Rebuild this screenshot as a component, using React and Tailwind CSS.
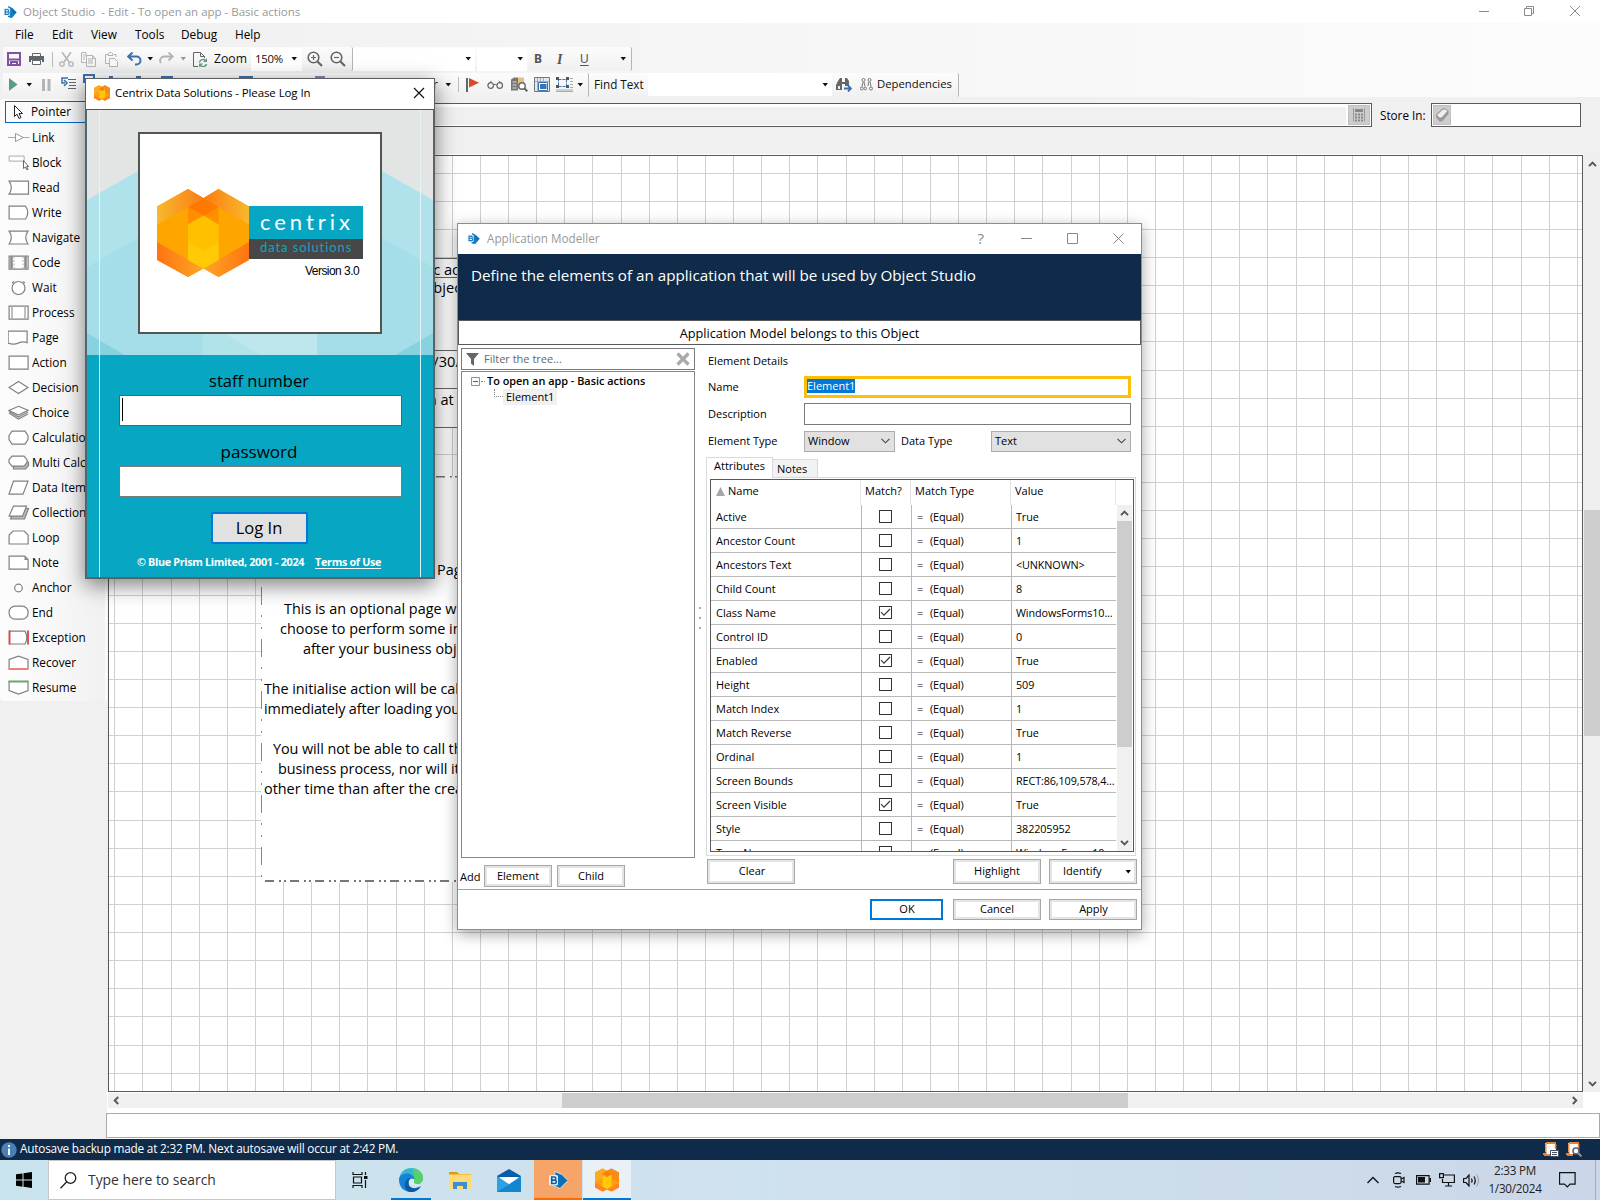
import React from "react";

const Caret = ({ className = "" }) => (
  <svg width="7" height="4" viewBox="0 0 7 4" className={"shrink-0 " + className} fill="currentColor">
    <path d="M0.5 0h5.5L3.25 3.4z" />
  </svg>
);

const Svg = ({ w = 16, h = 16, className = "", children, ...rest }) => (
  <svg width={w} height={h} viewBox={`0 0 ${w} ${h}`} fill="none" className={"shrink-0 " + className} {...rest}>
    {children}
  </svg>
);

const PrismIcon = ({ size = 14, className = "" }) => (
  <svg width={size} height={size} viewBox="0 0 14 14" className={"shrink-0 " + className}>
    <path d="M5.5 1 9.500 3.300 13.700 7.200 8.800 13 5 12z" fill="#0b6fb4" />
    <path d="M5.5 1 9.500 3.300 10 9 13.700 7.200 8.800 13 5 12z" fill="#2a8fd0" opacity="0.4" />
    <rect x="0.5" y="3" width="6.6" height="7.8" rx="1" fill="#e4f3fb" />
    <path d="M2.200 4.500h2.300a1.100 1.100 0 0 1 0 2.300H2.200zM2.200 6.800h2.700a1.200 1.200 0 0 1 0 2.500H2.200z" fill="none" stroke="#1d7cbd" strokeWidth="1.200" />
  </svg>
);

const HexIcon = ({ size = 16, className = "" }) => (
  <svg width={size} height={size} viewBox="0 0 16 16" className={"shrink-0 " + className}>
    <path d="M5 0.3 8 1.8 11 0.3 16 3v10l-5 2.7L8 14.3 5 15.7 0 13V3z" fill="#ff9d0c" />
    <path d="M0 3 5 .3 8 1.8 5 4v3L0 9.500z" fill="#f9ab22" />
    <path d="M11 .3 16 3v6.500L11 7V4L8 1.800z" fill="#f98a1c" />
    <path d="M5 4.500 8 6l3-1.500v8L8 14l-3-1.500z" fill="#ffc80a" />
    <path d="M5 4 8 1.800 11 4 8 6z" fill="#ff7d05" />
    <path d="M0 10l5 2.500L8 14.300 5 15.700 0 13z" fill="#ff8420" />
    <path d="M16 10l-5 2.500L8 14.300l3 1.400 5-2.700z" fill="#ff8420" />
  </svg>
);

/* ---------- Top area ---------- */

function TitleBar() {
  return (
    <div className="flex h-[23px] items-center bg-white pl-[3px] text-[#999]">
      <PrismIcon size={14} />
      <span className="ml-[6px] text-[11.500px] whitespace-pre">Object Studio  - Edit - To open an app - Basic actions</span>
      <div className="mb-[2px] ml-auto flex items-center pr-[20px]">
        <Svg w={10} h={10}><path d="M0 5.500h10" stroke="#8a8a8a" /></Svg>
        <Svg w={10} h={10} className="ml-[35px]"><path d="M0.500 2.500h7v7h-7zM2.500 2.500v-2h7v7h-2" stroke="#8a8a8a" /></Svg>
        <Svg w={10} h={10} className="ml-[36px]"><path d="M0 0l10 10M10 0L0 10" stroke="#8a8a8a" /></Svg>
      </div>
    </div>
  );
}

function MenuBar() {
  return (
    <div className="flex h-[24px] items-center pl-[15px] text-[11.800px]">
      <span className="w-[37px]">File</span>
      <span className="w-[39px]">Edit</span>
      <span className="w-[44px]">View</span>
      <span className="w-[46px]">Tools</span>
      <span className="w-[54px]">Debug</span>
      <span>Help</span>
    </div>
  );
}

const Strip = ({ className = "", children }) => (
  <div className={"flex h-[24px] items-center rounded-[2px] border-r border-[#b5b5b5] bg-linear-to-b from-[#fcfcfc] to-[#f0f0f0] " + className}>
    {children}
  </div>
);

function Toolbars() {
  return (
    <div className="flex h-[50px] flex-col">
      <div className="flex h-[25px] text-[#111]">
        <Strip className="ml-[3px] w-[350px] pl-[4px]">
          <Svg w={14} h={14}><path d="M1 1h12v12H1z" stroke="#8152a3" strokeWidth="2" /><path d="M1 7.500h12M4 13v-3h6v3" stroke="#8152a3" strokeWidth="2" /></Svg>
          <Svg w={15} h={14} className="ml-[8px]"><path d="M3.500 4V1.500h8V4" stroke="#5f666c" /><path d="M0 4h15v6h-2V8H2v2H0z" fill="#5f666c" /><path d="M3.500 8.500h8v4h-8z" stroke="#5f666c" fill="#fff" /></Svg>
          <div className="ml-[8px] h-[15px] w-px bg-[#bbb]" />
          <Svg w={15} h={15} className="ml-[6px]"><path d="M3 0l7 10M12 0L5 10" stroke="#b4b4b4" strokeWidth="1.500" /><circle cx="3" cy="12" r="2.200" stroke="#b4b4b4" strokeWidth="1.300" /><circle cx="12" cy="12" r="2.200" stroke="#b4b4b4" strokeWidth="1.300" /></Svg>
          <Svg w={15} h={15} className="ml-[7px]"><path d="M5 4V.500H.500v10H5M5.500 3.500h6l3 3v8h-9z" stroke="#b4b4b4" /><path d="M2 3h2M2 5h2M2 7h2M7 7h5M7 9h5M7 11h5M11.500 3.500v3h3" stroke="#b4b4b4" /></Svg>
          <Svg w={13} h={15} className="ml-[9px]"><path d="M4 11.500H.500v-9H3M9 2.500h2V5M3 3.500V2l1.500-1.500h2L8 2v1.500z" stroke="#b4b4b4" /><path d="M4.500 6.500h5l3 3v5h-8z" stroke="#b4b4b4" fill="#fafafa" /></Svg>
          <Svg w={15} h={14} className="ml-[9px]"><path d="M1 4.500h8.500a4 4 0 0 1 0 8H8M5.500 0.500l-4.300 4 4.300 4" stroke="#3a72b0" strokeWidth="2" /></Svg>
          <Caret className="ml-[5px]" />
          <Svg w={15} h={14} className="ml-[5px]"><path d="M14 4.500H5.500a4 4 0 0 0-3.500 6.500M9.500 0.500l4.300 4-4.300 4" stroke="#b4b4b4" strokeWidth="1.800" /></Svg>
          <Caret className="ml-[6px] text-[#999]" />
          <Svg w={15} h={15} className="ml-[6px]"><path d="M5 14.500H.500V.500h7l4 4V6M7.500.500v4h4" stroke="#666" /><path d="M6.500 10.500a3.500 3.500 0 0 1 6-2M13.500 12a3.500 3.500 0 0 1-6 1.500" stroke="#5f9f86" strokeWidth="1.500" /><path d="M14 6v4h-4zM6 15.500v-4h4z" fill="#5f9f86" /></Svg>
          <span className="ml-[6px] w-[37px] text-[12.200px]">Zoom</span>
          <div className="flex h-[23px] w-[51px] items-center bg-white pl-[4px]">
            <span className="w-[35px] text-[11.400px] tracking-[-0.02em]">150%</span>
            <Caret className="ml-[1px]" />
          </div>
          <Svg w={16} h={16} className="ml-[5px]"><circle cx="6.500" cy="6.500" r="5.300" stroke="#666" strokeWidth="1.600" /><path d="M10.500 10.500l4.500 4.500" stroke="#666" strokeWidth="2.200" /><path d="M4 6.500h5M6.500 4v5" stroke="#3a72b0" strokeWidth="1.200" /></Svg>
          <Svg w={16} h={16} className="ml-[7px]"><circle cx="6.500" cy="6.500" r="5.300" stroke="#666" strokeWidth="1.600" /><path d="M10.500 10.500l4.500 4.500" stroke="#666" strokeWidth="2.200" /><path d="M4 6.500h5" stroke="#3a72b0" strokeWidth="1.200" /></Svg>
        </Strip>
        <Strip className="w-[279px]">
          <div className="flex h-[23px] w-[122px] items-center justify-end bg-white pr-[3px]"><Caret /></div>
          <div className="ml-[2px] flex h-[23px] w-[50px] items-center justify-end bg-white pr-[3px]"><Caret /></div>
          <span className="ml-[7px] w-[23px] font-['Noto_Sans'] text-[12px] font-bold text-[#555]">B</span>
          <span className="w-[23px] font-['Liberation_Serif'] text-[14px] font-bold text-[#555] italic">I</span>
          <span className="font-['Liberation_Sans'] text-[12px] text-[#555] underline underline-offset-2">U</span>
          <Caret className="ml-auto mr-[4px]" />
        </Strip>
      </div>
      <div className="flex h-[25px] items-center text-[#111]">
        <Strip className="ml-[3px] w-[586px] pl-[6px]">
          <Svg w={9} h={13}><path d="M0 0l8.500 6.500L0 13z" fill="#5c9c84" /></Svg>
          <Caret className="ml-[8px]" />
          <Svg w={9} h={12} className="ml-[9px]"><path d="M0 0h3v12H0zM5.500 0h3v12h-3z" fill="#b4b4b4" /></Svg>
          <Svg w={16} h={13} className="mb-[3px] ml-[9px]"><path d="M8 1H2v5h3M4 3l3 3-3 3" stroke="#3a72b0" strokeWidth="1.500" /><path d="M8 2.500h8M9 5.500h7M9 8.500h7M8 11.500h8" stroke="#666" /></Svg>
          <div className="mb-[12px] ml-[7px] h-[9px] w-[12px] border-2 border-[#3a72b0]" />
          <div className="mb-[14px] ml-[14px] h-[3px] w-[4px] bg-[#3a72b0]" />
          <div className="mb-[14px] ml-[23px] h-[3px] w-[5px] bg-[#3a72b0]" />
          <div className="mb-[14px] ml-[20px] h-[4px] w-[12px] bg-[#3a72b0]" />
          <div className="mb-[14px] ml-[66px] h-[3px] w-[14px] bg-[#3a72b0]" />
          <div className="mb-[14px] ml-[62px] h-[3px] w-[10px] bg-[#9a7bb0]" />
          <span className="ml-auto text-[12px] font-medium">r</span>
          <Caret className="ml-[7px]" />
          <div className="ml-[6px] h-[15px] w-px bg-[#bbb]" />
          <Svg w={13} h={14} className="ml-[7px]"><path d="M1 0v14" stroke="#666" strokeWidth="2" /><path d="M3 0l10 4.700L3 9.400z" fill="#d9492a" /></Svg>
          <Svg w={17} h={9} className="ml-[8px]"><circle cx="3.700" cy="5.500" r="2.800" stroke="#666" strokeWidth="1.200" /><circle cx="12.700" cy="5.500" r="2.800" stroke="#666" strokeWidth="1.200" /><path d="M6.500 5q1.700-1.500 3.400 0M1 4.500L4.500.800M15.500 4.500L12 .800" stroke="#666" /></Svg>
          <Svg w={17} h={15} className="ml-[7px]"><path d="M0 2.500L3 .500h4v13H0z" fill="#777" /><path d="M1.500 5h4M1.500 8h4M1.500 11h4" stroke="#ddd" /><path d="M7 .500h6v5H9v6H7z" fill="#e8bf78" /><circle cx="11" cy="9" r="3.200" stroke="#666" strokeWidth="1.400" fill="#fff" /><path d="M13.300 11.300l3 3" stroke="#666" strokeWidth="2" /></Svg>
          <Svg w={16} h={15} className="ml-[6px]"><path d="M.500.500h15v14H.500z" stroke="#777" fill="#e3ebf2" /><path d="M3.500 1v13M6.500 1v5M9.500 1v3M1 4.500h14" stroke="#aaa" /><path d="M4.500 5.500h9v8h-9z" fill="#fff" stroke="#3a72b0" /><path d="M6 7h6.500v5H6z" fill="#3a72b0" /></Svg>
          <Svg w={17} h={15} className="ml-[6px]"><path d="M2.500 2.500h8v7h-8z" stroke="#3a72b0" strokeDasharray="3 1" /><path d="M0 0h3v3H0zM10 0h3v3h-3zM0 8h3v3H0zM10 8h3v3h-3z" fill="#555" /><path d="M14 1.500h3M14 4.500h3M14 7.500h3M14 10.500h3M0 13h17M0 14.500h17" stroke="#aaa" /></Svg>
          <Caret className="ml-[4px] mr-[4px]" />
        </Strip>
        <Strip className="w-[370px] pl-[5px] text-[11.700px]">
          <span className="w-[54px] whitespace-nowrap">Find Text</span>
          <div className="flex h-[23px] w-[184px] items-center justify-end bg-white pr-[3px]"><Caret /></div>
          <Svg w={16} h={15} className="ml-[4px]"><path d="M2 4L4 1h2v4h3V1h2l2 3v5H9V7H6v6H0V8z" fill="#666" /><path d="M2 9h2v3H2z" fill="#eee" /><path d="M8 11.500h7M12 8.500l3 3-3 3" stroke="#3a72b0" strokeWidth="1.800" /></Svg>
          <Svg w={13} h={13} className="ml-[8px]"><g stroke="#777"><circle cx="3.500" cy="2" r="1.500" /><circle cx="9.500" cy="2" r="1.500" /><circle cx="1.800" cy="10.500" r="1.500" /><circle cx="5.300" cy="10.500" r="1.300" /><circle cx="11" cy="10.500" r="1.500" /><path d="M3 4L2 8.500M4 4l1 4.500M10 4l1 4.500M8.500 4L8 8" /></g></Svg>
          <span className="ml-[4px] text-[11.300px]">Dependencies</span>
        </Strip>
      </div>
    </div>
  );
}

/* ---------- Toolbox ---------- */

const s = { stroke: "#808080", strokeWidth: 1.2, fill: "#fff" };
const toolIcons = {
  Pointer: <path d="M7 0v11l2.500-2.300L11.500 13l2-1-2-4H15z" stroke="#222" fill="#fff" />,
  Link: <><path d="M-1 7h22" stroke="#aaa" /><path d="M7 3l8 4-8 4z" stroke="#999" fill="#fff" /></>,
  Block: <><path d="M.600.600h15v5H.600z" stroke="#aaa" fill="#fff" /><path d="M15 5v8l2-1.500 1.500 3 1-.500-1.300-3H20z" stroke="#666" fill="#fff" /></>,
  Read: <path d="M.600.600H20v13H.600Q5 7 .600.600z" {...s} />,
  Write: <path d="M.600.600H17Q21.500 7 17 13.500H.600z" {...s} />,
  Navigate: <path d="M.600.600H19.500Q15 7 19.500 13.500H.600Q5 7 .600.600z" {...s} />,
  Code: <><path d="M.600.600h19v13H.600z" {...s} /><path d="M3 1v12M17 1v12" stroke="#888" strokeWidth="2.500" /><path d="M5.500 1v12M14.500 1v12" stroke="#aaa" strokeDasharray="2 1.500" /></>,
  Wait: <><circle cx="10" cy="7.500" r="6.500" {...s} /><path d="M3.500 2.500l2-1.500M16.500 2.500l-2-1.500" stroke="#888" strokeWidth="1.500" /></>,
  Process: <><path d="M.600.600h19v13H.600z" {...s} /><path d="M3.500 1v12M16.500 1v12" stroke="#aaa" strokeWidth="1.500" /></>,
  Page: <path d="M-.4.600h19v11.500q-4.500-1.500-9 .500t-10 0z" {...s} />,
  Action: <path d="M.600.600h19v13H.600z" {...s} />,
  Decision: <path d="M10 1l9.500 6L10 13 .500 7z" {...s} />,
  Choice: <><path d="M.500 7.500L10 13.500l9.500-5" {...s} /><path d="M.500 6L10 11.500l9.500-5" {...s} /><path d="M10 .800l9.500 4L10 9.500.500 5z" {...s} /></>,
  Calculation: <path d="M3.500.600h13l3 4.500v4l-3 4.500h-13l-3-4.500v-4z" {...s} />,
  "Multi Calc": <><path d="M4 4h13l3 3v3l-3 3.500H5z" {...s} fill="#bbb" /><path d="M3.500.600h12l3 3.500v3l-3 3.500h-12l-3-3.500v-3z" {...s} /></>,
  "Data Item": <path d="M5 .600h14.500l-5 13H.500z" {...s} />,
  Collection: <><path d="M7 3h13l-4 10.500H2z" {...s} fill="#bbb" /><path d="M5 .600h13l-4 10H.600z" {...s} /></>,
  Loop: <path d="M.600 13.500V4.500l4-4h11l4 4v9z" {...s} />,
  Note: <><path d="M.600.600h15.500l3.500 3.500v9.500H.600z" {...s} /><path d="M16 .600v4h3.600z" fill="#888" /></>,
  Anchor: <circle cx="10" cy="7.500" r="3.800" {...s} />,
  End: <rect x=".6" y=".6" width="19" height="13" rx="6" {...s} />,
  Exception: <><path d="M1 .600h15.500Q20 7 16.500 13.500H1z" {...s} /><path d="M1 0v14M19.500 0v14" stroke="#e04343" strokeWidth="1.800" /></>,
  Recover: <><path d="M.600 13V4L10 .600 19.500 4v9z" {...s} /><path d="M0 13.500h20" stroke="#ec8080" strokeWidth="2" /></>,
  Resume: <><path d="M.600 1v9L10 13.500l9.500-3.500V1z" {...s} /><path d="M0 1h20" stroke="#6ba56b" strokeWidth="2" /></>,
};

function Toolbox() {
  return (
    <div className="w-[107px] shrink-0 border-r-2 border-[#fbfbfb]">
      <div className="flex h-[602px] w-[104px] flex-col rounded-[4px] bg-linear-to-r from-[#fcfcfc] via-[#f8f8f8] to-[#f1f1f1] pt-px pl-[5px]">
        {Object.entries(toolIcons).map(([name, icon], i) => (
          <div key={name} className={"flex h-[25px] shrink-0 items-center " + (i === 0 ? "h-[22px]! mt-px mb-[2px] border border-[#0067c0] pl-[2px]" : "pl-[3px]")}>
            <svg width="22" height="15" viewBox="-0.500 -0.500 22 15" fill="none" className={"shrink-0 " + (i === 0 ? "-ml-px" : "")}>{icon}</svg>
            <span className="ml-[2px] text-[11.800px] whitespace-nowrap">{name}</span>
          </div>
        ))}
      </div>
    </div>
  );
}

/* ---------- Diagram canvas ---------- */

function Grid() {
  const xs = Array.from({ length: 53 }, (_, k) => Math.floor(114.8 + 28.125 * k) - 109 + 0.5);
  const ys = Array.from({ length: 33 }, (_, k) => Math.floor(173.2 + 28.125 * k) - 156 + 0.5);
  return (
    <svg width="1473" height="935" className="absolute inset-0">
      {xs.map((x) => <line key={x} x1={x} x2={x} y1="0" y2="935" stroke="#d0d0d0" />)}
      {ys.map((y) => <line key={y} x1="0" x2="1473" y1={y} y2={y} stroke="#d0d0d0" />)}
    </svg>
  );
}

function Canvas() {
  return (
    <div className="relative h-[937px] w-[1475px] overflow-hidden border border-[#5a5a5a] bg-white text-[14.400px] leading-[20px]">
      <Grid />
      {/* information stage */}
      <div className="absolute top-[102px] left-[240px] w-[160px] border border-[#666] bg-white text-[14.600px]">
        <div className="flex h-[19px] items-center border-b border-[#666] pt-[2px] pl-[55px] leading-[19px] whitespace-nowrap">Basic actions</div>
        <div className="h-[73px] border-b border-[#666] pl-[72px] leading-[18px] whitespace-nowrap">Object</div>
        <div className="h-[38px] border-b border-[#666] pl-[75px] whitespace-nowrap">1/30/2024</div>
        <div className="h-[38px] pl-[74px] whitespace-nowrap">in at</div>
      </div>
      {/* note stage */}
      <div className="absolute top-[320px] left-[152px] h-[406px] w-[400px] bg-white">
        <svg width="400" height="406" className="absolute inset-0" fill="none">
          <path d="M0.500 0v404" stroke="#888" strokeDasharray="18 10 2 10 2 10" strokeDashoffset="-7" />
          <path d="M4 405h396M0 .500h400" stroke="#777" strokeWidth="2" strokeDasharray="9 5 2 3 2 4" />
        </svg>
        <div className="absolute top-[84px] left-[3px] flex w-[390px] flex-col whitespace-pre">
          <div className="pl-[173px]">Page</div>
          <div className="pt-[19px] pl-[20px]">This is an optional page where you might</div>
          <div className="pl-[16px]">choose to perform some initialisation tasks</div>
          <div className="pl-[39px]">after your business object is initialised.</div>
          <div className="pt-[20px] tracking-[-0.005em]">The initialise action will be called automatically</div>
          <div className="tracking-[-0.010em]">immediately after loading your business object.</div>
          <div className="pt-[20px] pl-[9px] tracking-[-0.005em]">You will not be able to call this action from a</div>
          <div className="pl-[14px] tracking-[-0.005em]">business process, nor will it be called at any</div>
          <div>other time than after the creation of the object.</div>
        </div>
      </div>
    </div>
  );
}

const Chevron = ({ dir }) => (
  <svg width="9" height="9" viewBox="0 0 9 9" fill="none" className="shrink-0">
    {dir === "up" && <path d="M1 6.200l3.500-3.500L8 6.200" stroke="#555" strokeWidth="1.900" />}
    {dir === "down" && <path d="M1 2.800l3.500 3.500L8 2.800" stroke="#555" strokeWidth="1.900" />}
    {dir === "left" && <path d="M6.200 1L2.700 4.500 6.200 8" stroke="#555" strokeWidth="1.900" />}
    {dir === "right" && <path d="M2.800 1l3.500 3.500L2.800 8" stroke="#555" strokeWidth="1.900" />}
  </svg>
);

function Workspace() {
  return (
    <div className="flex h-[1042px] bg-[#f0f0f0]">
      <div className="pt-[2px]"><Toolbox /></div>
      <div className="flex flex-1 flex-col">
        <div className="flex h-[57px] items-start pt-[6px]">
          <div className="flex h-[24px] w-[1265px] items-center justify-end border border-[#5a5a5a] bg-white pr-px">
            <div className="mt-[2px] mr-[2px] h-[18px] w-[1237px] bg-[#f0f0f0]" />
            <div className="flex h-[20px] w-[22px] items-center justify-center border border-[#c0c0c0] bg-[#cdcdcd]">
              <Svg w={12} h={14}><path d="M.500 0v13.500M11.500 0v13.500" stroke="#999" /><path d="M2 1h8v3H2z" fill="#888" /><path d="M2 6.500h8M2 9.500h8M2 12.500h8" stroke="#888" strokeWidth="2" strokeDasharray="2 1" /></Svg>
            </div>
          </div>
          <span className="mt-[4px] w-[59px] pl-[8px] text-[11.700px] whitespace-nowrap">Store In:</span>
          <div className="flex h-[24px] w-[150px] items-center border border-[#5a5a5a] bg-white pl-px">
            <div className="flex h-[20px] w-[18px] items-center justify-center border border-[#c0c0c0] bg-[#cdcdcd]">
              <Svg w={14} h={14}><path d="M1 9V6.500L7.500.500H10L13.500 3v3L7 13.500H4.500z" fill="#999" /><path d="M1.500 7L8 1h2l3 2-6.500 7H4.500z" fill="#eee" stroke="#888" strokeWidth=".7" /></Svg>
            </div>
          </div>
        </div>
        <div className="flex">
          <div className="w-px bg-[#f0f0f0]" />
          <div className="border-t border-white"><Canvas /></div>
          <div className="ml-px flex w-[16px] flex-col items-center bg-[#efefef] pt-[6px] pb-[4px]">
            <Chevron dir="up" />
            <div className="mt-[341px] h-[226px] w-full bg-[#cdcdcd]" />
            <div className="mt-auto"><Chevron dir="down" /></div>
          </div>
        </div>
        <div className="flex h-[17px] bg-white pt-px">
          <div className="ml-px flex h-[15px] w-[1475px] items-center bg-[#f0f0f0] px-[4px]">
            <Chevron dir="left" />
            <div className="ml-[441px] h-[15px] w-[566px] bg-[#cdcdcd]" />
            <div className="ml-auto"><Chevron dir="right" /></div>
          </div>
        </div>
        <div className="h-[30px] bg-white pt-[4px]"><div className="-ml-px h-[25px] border border-[#aaa] bg-white" /></div>
      </div>
    </div>
  );
}

function StatusBar() {
  return (
    <div className="flex h-[21px] items-center bg-[#0f2b49] pr-[18px] pl-px text-[12px] text-white">
      <Svg w={16} h={16}><circle cx="8" cy="8" r="7.700" fill="#4a7fb8" /><path d="M7 3h2v2H7zM7 6.500h2V13H7z" fill="#fff" /></Svg>
      <span className="mb-[2px] ml-[3px] text-[11.800px] tracking-[-0.018em]">Autosave backup made at 2:32 PM. Next autosave will occur at 2:42 PM.</span>
      <Svg w={16} h={15} className="ml-auto"><path d="M2 1h11v9H2z" fill="#fff" /><path d="M3 1.500v9M12.500 2v5M0 12h5M1 13h6M3 1h10" stroke="#ea8033" strokeWidth="1.800" /><path d="M3.500 2h8v10h-8z" fill="#fff" /><path d="M7.500 8.500h8v6h-8z" fill="#fff" stroke="#45525f" /><path d="M9 10.500h5M9 12.500h5" stroke="#45525f" /></Svg>
      <Svg w={16} h={15} className="ml-[7px]"><path d="M2 1h11v9H2z" fill="#fff" /><path d="M3 1.500v9M12.500 2v5M0 12h5M1 13h6M3 1h10" stroke="#ea8033" strokeWidth="1.800" /><path d="M3.500 2h8v10h-8z" fill="#fff" /><circle cx="10" cy="9" r="3" fill="#fff" stroke="#5a6570" strokeWidth="1.600" /><path d="M12 11l3.500 3.500" stroke="#8a949c" strokeWidth="2" /></Svg>
    </div>
  );
}

/* ---------- Taskbar ---------- */

function Taskbar() {
  return (
    <div className="flex h-[40px] bg-linear-to-r from-[#c9e3ec] via-[#cfe1ee] to-[#cbd7e8]">
      <div className="flex w-[48px] items-center justify-center">
        <Svg w={16} h={16}><path d="M0 2.300L6.500 1.400v6.200H0zM7.500 1.200L16 0v7.600H7.500zM0 8.500h6.500v6.200L0 13.800zM7.500 8.500H16V16l-8.500-1.200z" fill="#000" /></Svg>
      </div>
      <div className="flex w-[288px] items-center border border-[#c8c8c8] bg-white pl-[11px]">
        <Svg w={17} h={17}><circle cx="10.500" cy="6" r="5.300" stroke="#222" strokeWidth="1.300" /><path d="M6.800 9.800L.500 16.300" stroke="#222" strokeWidth="1.300" /></Svg>
        <span className="ml-[11px] pt-px text-[13.900px] text-[#333]">Type here to search</span>
      </div>
      <div className="flex w-[48px] items-center justify-center">
        <Svg w={17} h={16}><path d="M1 0v2.500h9V0M1 16v-2.500h9V16M1.500 5h8v6h-8zM13.500 0v3M13.500 8v8" stroke="#111" strokeWidth="1.200" /><path d="M12 4h3.500v3H12z" fill="#111" /></Svg>
      </div>
      <div className="flex w-[54px] flex-col items-center pt-[8px] pr-px">
        <Svg w={24} h={24}>
          <path d="M12 0C19 0 24 4.500 24 10c0 4-3 6-6 6-2 0-4-.700-3-2.200C16.500 11 14 8 10 8 5 8 1 11 0 14 0 5 5 0 12 0z" fill="#35b9d0" />
          <path d="M14 .200C20 1 24 5 24 10c0 4-3 6-6 6-2.500 0-4-.700-3-2.200C16 8 14 4 14 .200z" fill="#59cf6c" />
          <path d="M0 12c0-5 5-7 9-6.500 4 .500 6.500 3.500 6.500 6-3-2-6 0-6 3.500 0 5 5 7.500 11 5C17 24 13 24 12 24 5 24 0 19 0 12z" fill="#1883d4" />
          <path d="M9.500 15c0 5 6 7 12.500 3-2 4-6 6-10 6-5 0-7-5-6-9 .700-3 3-5 5-5-1.200 1.500-1.500 3-1.500 5z" fill="#0c59a4" />
          <path d="M10.500 13c.500-2.500 3-3 4.500-1.500.500 1-.500 2-.200 3 .500 1 2 1.500 3.700 1.500-3 2.500-9 1.500-8-3z" fill="#dcedf5" />
        </Svg>
        <div className="mt-auto h-[2px] w-[40px] bg-[#0078d7]" />
      </div>
      <div className="flex w-[46px] items-center justify-center pr-[2px]">
        <Svg w={22} h={19}><path d="M0 1h8l2 2h12v15H0z" fill="#f7bc3d" /><path d="M0 4h22v14H0z" fill="#fddc78" /><path d="M0 1h8l2 2H0z" fill="#d99a16" /><path d="M4 18v-7h14v7h-4v-3H8v3z" fill="#3a8fd6" /></Svg>
      </div>
      <div className="flex w-[50px] items-center justify-center">
        <Svg w={24} h={23}><path d="M0 7L12 0l12 7v16H0z" fill="#0b5ca8" /><path d="M3 8h18v8H3z" fill="#fff" /><path d="M0 7l12 8 12-8v16H0z" fill="#2aa3e4" /><path d="M2 8l10 7 10-7z" fill="#fff" /><path d="M0 23L24 8v15z" fill="#1585cf" /></Svg>
      </div>
      <div className="flex w-[48px] flex-col items-center bg-[#f6a468] pt-[11px]">
        <svg width="20" height="18" viewBox="0 0 20 18" className="shrink-0">
          <path d="M7 0.500 14 3.500 20 9.500 12 17.500 6 15z" fill="#0f6fb3" stroke="#e8f2f8" strokeWidth=".8" />
          <rect x="1" y="4" width="9" height="10.500" rx="1.500" fill="#dff0fa" />
          <path d="M3.700 6h2.600a1.500 1.500 0 0 1 0 3.100H3.700zM3.700 9.100h3a1.700 1.700 0 0 1 0 3.400h-3z" fill="none" stroke="#125f9c" strokeWidth="1.600" />
        </svg>
        <div className="mt-auto h-[2px] w-full bg-[#ff6a00]" />
      </div>
      <div className="ml-px flex w-[48px] flex-col items-center bg-[#e9f1f7] pt-[8px]">
        <HexIcon size={24} />
        <div className="mt-auto h-[2px] w-full bg-[#0078d7]" />
      </div>
      <div className="ml-auto flex items-center">
        <Svg w={12} h={8} className="mr-px"><path d="M.500 7L6 1.500 11.500 7" stroke="#111" strokeWidth="1.300" /></Svg>
        <Svg w={12} h={16} className="ml-[13px]"><rect x=".6" y="4.600" width="7.500" height="7" rx="1.500" stroke="#111" strokeWidth="1.200" /><path d="M8 7l3-1.500v5L8 9M2 1.500Q5 .200 8 1.500M2 14.500q3 1.300 6 0" stroke="#111" strokeWidth="1.200" /></Svg>
        <Svg w={15} h={10} className="ml-[11px]"><path d="M.600.600h12.500v8.500H.600z" stroke="#111" strokeWidth="1.200" /><path d="M2 2h7v5.500H2zM13.500 3H15v4h-1.500z" fill="#111" /></Svg>
        <Svg w={16} h={14} className="ml-[8px]"><path d="M5 2h10.400v7.500H3.500V6M9.500 9.500V13M6 13h7" stroke="#111" strokeWidth="1.200" /><path d="M.600.600h3.800v4H.600z" stroke="#111" strokeWidth="1.200" /></Svg>
        <Svg w={17} h={13} className="ml-[8px]"><path d="M.600 4.500h2.500L6 1v11L3.100 8.500H.600z" stroke="#111" strokeWidth="1.200" /><path d="M8.500 4.500q1.200 2 0 4M11 2.500q2.500 4 0 8" stroke="#111" strokeWidth="1.200" /><path d="M13.500.500q4 6 0 12" stroke="#999" /></Svg>
        <div className="-mt-[2px] ml-[8px] flex w-[54px] flex-col items-center text-[11.700px] leading-[18px] tracking-[-0.020em] text-[#222]">
          <span>2:33 PM</span>
          <span>1/30/2024</span>
        </div>
        <Svg w={17} h={16} className="ml-[17px]"><path d="M.600.600h15.500v11.500h-5L8.300 15l-2.800-2.900h-5z" stroke="#111" strokeWidth="1.200" /></Svg>
        <div className="ml-[19px] h-[40px] w-px bg-[#9fb0c2]" />
        <div className="w-[4px]" />
      </div>
    </div>
  );
}

/* ---------- Application Modeller ---------- */

const rows = [
  ["Active", false, "True"],
  ["Ancestor Count", false, "1"],
  ["Ancestors Text", false, "<UNKNOWN>"],
  ["Child Count", false, "8"],
  ["Class Name", true, "WindowsForms10..."],
  ["Control ID", false, "0"],
  ["Enabled", true, "True"],
  ["Height", false, "509"],
  ["Match Index", false, "1"],
  ["Match Reverse", false, "True"],
  ["Ordinal", false, "1"],
  ["Screen Bounds", false, "RECT:86,109,578,4..."],
  ["Screen Visible", true, "True"],
  ["Style", false, "382205952"],
  ["Type Name", false, "WindowsForms10..."],
];

const Btn = ({ className = "", children }) => (
  <div className={"flex items-center justify-center border border-[#a8a8a8] bg-white shadow-[inset_0_0_0_2px_#e4e4e4] " + className}>{children}</div>
);

const Select = ({ className, children }) => (
  <div className={"flex h-[21px] items-center justify-between border border-[#adadad] bg-[#e1e1e1] pr-[4px] pl-[3px] " + className}>
    {children}
    <Svg w={9} h={6}><path d="M.500.800l4 4 4-4" stroke="#444" strokeWidth="1.100" /></Svg>
  </div>
);

function AttributeTable() {
  return (
    <div className="flex h-[373px] w-[424px] flex-col overflow-hidden border border-[#5a5a5a] bg-white">
      <div className="flex h-[25px] shrink-0 items-center">
        <div className="flex h-full w-[150px] items-center border-r border-[#e2e2e2] pb-[3px] pl-[5px]">
          <Svg w={9} h={9}><path d="M4.500 0L9 9H0z" fill="#a6a6a6" /></Svg>
          <span className="ml-[3px]">Name</span>
        </div>
        <div className="flex h-full w-[50px] items-center border-r border-[#e2e2e2] pb-[3px] pl-[4px]">Match?</div>
        <div className="flex h-full w-[100px] items-center border-r border-[#e2e2e2] pb-[3px] pl-[4px]">Match Type</div>
        <div className="flex h-full w-[105px] items-center border-r border-[#e2e2e2] pb-[3px] pl-[4px]">Value</div>
      </div>
      <div className="flex min-h-0 flex-1">
        <div className="flex w-[405px] flex-col">
          {rows.map(([name, on, value]) => (
            <div key={name} className="flex h-[24px] shrink-0 border-b border-[#b8b8b8]">
              <div className="flex w-[151px] items-center border-r border-[#b8b8b8] pt-[2px] pl-[5px]">{name}</div>
              <div className="flex w-[50px] items-center justify-center border-r border-[#b8b8b8] pr-[3px]">
                <div className="flex size-[13px] items-center justify-center border border-[#333]">
                  {on && <Svg w={11} h={9}><path d="M1 4.200l3 3L10 1" stroke="#333" strokeWidth="1.100" /></Svg>}
                </div>
              </div>
              <div className="flex w-[100px] items-center border-r border-[#b8b8b8] pt-[2px] pl-[5px] tracking-[-0.020em]"><span className="w-[13px]">=</span>(Equal)</div>
              <div className="flex w-[104px] items-center pt-[2px] pl-[4px] text-[10.800px] tracking-[-0.010em] whitespace-nowrap">{value}</div>
            </div>
          ))}
        </div>
        <div className="ml-px flex w-[15px] flex-col items-center bg-[#f0f0f0] pt-[4px] pb-[4px]">
          <Chevron dir="up" />
          <div className="mt-[3px] h-[226px] w-full bg-[#cdcdcd]" />
          <div className="mt-auto"><Chevron dir="down" /></div>
        </div>
      </div>
    </div>
  );
}

function Modeller() {
  return (
    <div className="absolute top-[223px] left-[457px] flex h-[707px] w-[685px] flex-col border border-[#8e8e8e] bg-white text-[11px] shadow-[0_4px_14px_rgba(0,0,0,0.35)]">
      <div className="flex h-[30px] shrink-0 items-center pb-[2px] pl-[9px] text-[#999]">
        <PrismIcon size={13} />
        <span className="mt-px ml-[7px] text-[11.700px]">Application Modeller</span>
        <span className="ml-auto text-[15px] text-[#888]">?</span>
        <Svg w={11} h={11} className="ml-[37px]"><path d="M0 5.500h11" stroke="#888" /></Svg>
        <Svg w={11} h={11} className="ml-[35px]"><path d="M.500.500h10v10H.500z" stroke="#888" /></Svg>
        <Svg w={11} h={11} className="mr-[17px] ml-[35px]"><path d="M.500.500l10 10M10.500.500l-10 10" stroke="#888" /></Svg>
      </div>
      <div className="h-[66px] shrink-0 bg-[#0f2b49] pt-[11px] pl-[13px] text-[15.200px] leading-[20px] text-white">
        Define the elements of an application that will be used by Object Studio
      </div>
      <div className="flex h-[25px] shrink-0 items-center justify-center border border-[#5a5a5a] pt-[2px] text-[12.750px]">Application Model belongs to this Object</div>
      <div className="flex h-[545px] shrink-0 border-b border-[#a0a0a0]">
        <div className="flex w-[239px] flex-col pt-[3px] pl-[3px]">
          <div className="flex h-[22px] w-[234px] items-center border border-[#7a7a7a] pl-[4px] text-[#666]">
            <Svg w={13} h={13}><path d="M0 0h13L8 6v7L5 10.500V6z" fill="#666" /></Svg>
            <span className="ml-[5px]">Filter the tree...</span>
            <Svg w={14} h={14} className="mr-[4px] ml-auto"><path d="M1.500 1.500l11 11M12.500 1.500l-11 11" stroke="#aaa" strokeWidth="3.200" /></Svg>
          </div>
          <div className="mt-px h-[487px] w-[234px] border border-[#828790]">
            <div className="flex h-[17px] items-center pt-[2px] pl-[9px] font-semibold">
              <Svg w={9} h={9}><path d="M.500.500h8v8h-8z" stroke="#919191" fill="#fafafa" /><path d="M2 4.500h5" stroke="#3a5fa0" /></Svg>
              <div className="mr-[2px] ml-px w-[4px] border-b border-dotted border-[#888]" />
              <span className="text-[10.900px] whitespace-nowrap">To open an app - Basic actions</span>
            </div>
            <div className="flex h-[16px] pl-[32px]">
              <div className="h-[8px] w-[9px] border-b border-l border-dotted border-[#888]" />
              <span className="flex h-[16px] items-center bg-[#f0f0f0] px-[3px]">Element1</span>
            </div>
          </div>
          <div className="mt-[7px] flex items-center">
            <span className="-ml-px w-[24px] pt-[2px]">Add</span>
            <Btn className="h-[22px] w-[68px]">Element</Btn>
            <Btn className="ml-[5px] h-[22px] w-[68px]">Child</Btn>
          </div>
        </div>
        <div className="flex w-[9px] flex-col items-start gap-[8px] pt-[262px] pl-[2px]">
          <div className="size-[2px] bg-[#aaa]" />
          <div className="size-[2px] bg-[#aaa]" />
          <div className="size-[2px] bg-[#aaa]" />
        </div>
        <div className="flex flex-1 flex-col">
          <div className="flex h-[30px] items-center pt-[2px] pl-[2px]">Element Details</div>
          <div className="flex h-[24px] items-center pl-[2px]">
            <span className="w-[96px]">Name</span>
            <div className="flex h-[22px] w-[327px] items-start border-[3px] border-[#fcbf09]">
              <span className="flex h-[14px] items-center bg-[#0078d7] text-white">Element1</span>
            </div>
          </div>
          <div className="mt-[3px] flex h-[24px] items-center pl-[2px]">
            <span className="w-[96px]">Description</span>
            <div className="h-[22px] w-[327px] border border-[#7a7a7a]" />
          </div>
          <div className="mt-[3px] flex h-[24px] items-center pl-[2px]">
            <span className="w-[96px]">Element Type</span>
            <Select className="w-[91px]">Window</Select>
            <span className="ml-[6px] w-[90px]">Data Type</span>
            <Select className="w-[140px]">Text</Select>
          </div>
          <div className="mt-[4px] flex h-[20px] items-end">
            <div className="z-10 -mb-px flex h-[21px] w-[67px] items-center justify-center border border-b-0 border-[#dadada] bg-white pb-[3px]">Attributes</div>
            <div className="flex h-[18px] w-[45px] items-center border border-b-0 border-l-0 border-[#dadada] bg-[#f2f2f2] pt-px pl-[4px]">Notes</div>
          </div>
          <div className="h-[379px] w-[430px] border border-[#dadada] pt-px pl-[3px]"><AttributeTable /></div>
          <div className="mt-[3px] flex">
            <Btn className="ml-px h-[25px] w-[88px] pl-[2px]">Clear</Btn>
            <Btn className="ml-[158px] h-[25px] w-[88px]">Highlight</Btn>
            <Btn className="ml-[8px] h-[25px] w-[88px] pl-[13px]"><span>Identify</span><Caret className="mr-[4px] ml-auto" /></Btn>
          </div>
        </div>
      </div>
      <div className="flex pt-[9px] pl-[412px]">
        <div className="flex h-[21px] w-[73px] items-center justify-center border-2 border-[#0078d7] pl-px">OK</div>
        <Btn className="ml-[10px] h-[21px] w-[88px]">Cancel</Btn>
        <Btn className="ml-[8px] h-[21px] w-[88px] pl-px">Apply</Btn>
      </div>
    </div>
  );
}

/* ---------- Login window ---------- */

function CentrixLogo() {
  return (
    <svg width="94" height="90" viewBox="156 188 94 90" className="shrink-0">
      <defs>
        <linearGradient id="topL"><stop offset="0" stopColor="#f7b92c" /><stop offset="1" stopColor="#fb7c18" /></linearGradient>
        <linearGradient id="topR"><stop offset="0" stopColor="#fd7a12" /><stop offset="1" stopColor="#f7b92c" /></linearGradient>
        <linearGradient id="botL"><stop offset="0" stopColor="#ff7412" /><stop offset="1" stopColor="#fda524" /></linearGradient>
        <linearGradient id="botR"><stop offset="0" stopColor="#fda524" /><stop offset="1" stopColor="#ff7412" /></linearGradient>
      </defs>
      <path d="M188 189l15.500 9 15-9 30.500 17.500v53.500L218.500 277l-15-8.500L188 277l-31-17v-53.500z" fill="#ffa500" />
      <path d="M157 206.500L188 189l15.500 9-15.500 9-31 17.500z" fill="url(#topL)" />
      <path d="M249 206.500L218.500 189l-15 9 15 9 30.500 17.500z" fill="url(#topR)" />
      <path d="M157 242l46.500 26.500L188 277l-31-17z" fill="url(#botL)" />
      <path d="M249 242l-45.500 26.500 15 8.500 30.500-17z" fill="url(#botR)" />
      <path d="M188 207l15.500-9 15 9v17.500l-15-9-15.500 9z" fill="#ff8f00" />
      <path d="M188 207l15.500-9 15 9-15 8.500z" fill="#ff7800" />
      <path d="M188 224.500l15.500-9 15 9V260l-15 8.500L188 260z" fill="#ffc000" />
      <path d="M188 242l15.500 9 15-9v18l-15 8.500L188 260z" fill="#ffca05" />
    </svg>
  );
}

function Login() {
  return (
    <div className="absolute top-[78px] left-[85px] flex h-[501px] w-[350px] flex-col border border-[#5c6064] bg-white shadow-[0_6px_20px_rgba(0,0,0,0.5)]">
      <div className="flex h-[31px] shrink-0 items-center border-b border-[#555] pb-[2px] pl-[8px]">
        <HexIcon />
        <span className="ml-[5px] text-[11.500px] tracking-[-0.008em]">Centrix Data Solutions - Please Log In</span>
        <Svg w={12} h={12} className="mr-[9px] ml-auto"><path d="M1 1l10 10M11 1L1 11" stroke="#111" strokeWidth="1.200" /></Svg>
      </div>
      <div className="relative flex-1 border-x border-b border-[#4d6a70] bg-[#07a7c3]">
        <svg width="346" height="245" viewBox="87 110 346 245" className="absolute top-0 left-0">
          <path d="M87 110h346v245H87z" fill="#e3e5e4" />
          <path d="M87 200L138 171H382L433 200v155H87z" fill="#b0e2ec" />
          <path d="M87 267L138 238H382L433 267v88H87z" fill="#a5dee8" />
          <path d="M87 333l38 22H87zM433 333l-38 22h38z" fill="#86d2df" />
          <path d="M203 334h114v21H203z" fill="#bde7ed" />
          <path d="M203 334h22l35 21h-57z" fill="#b1e3ea" />
        </svg>
        <div className="relative mr-[12px] ml-[12px] flex h-[467px] flex-col items-center border-x border-[#e2f4f7]">
          <div className="mt-[22px] flex h-[202px] w-[244px] flex-col border-2 border-[#53564f] bg-white pt-[54px] pl-[16px]">
            <div className="flex">
              <CentrixLogo />
              <div className="mt-[18px] -ml-px w-[114px] font-['Liberation_Sans']">
                <div className="flex h-[33px] items-center bg-[#07a7c3] pb-[3px] pl-[11px] font-['Lato'] text-[22px] tracking-[0.180em] text-white">centrix</div>
                <div className="flex h-[20px] items-center bg-[#474747] pb-[2px] pl-[11px] font-['Lato'] text-[13px] tracking-[0.070em] whitespace-nowrap text-[#07a7c3]">data solutions</div>
                <div className="pt-[5px] pl-[56px] text-[12px] leading-[14px] tracking-[-0.045em] whitespace-nowrap">Version 3.0</div>
              </div>
            </div>
          </div>
          <div className="mt-[36px] mr-[2px] flex h-[22px] items-center text-[16.500px]">staff number</div>
          <div className="mt-[3px] h-[31px] w-[283px] border border-[#0078d7] bg-white pt-[2px] pl-[2px]"><div className="h-[23px] w-px bg-black" /></div>
          <div className="mt-[15px] mr-[2px] flex h-[22px] items-center text-[17px]">password</div>
          <div className="mt-[3px] h-[31px] w-[283px] border border-[#7a7a7a] bg-white" />
          <div className="mt-[15px] mr-[2px] flex h-[32px] w-[97px] items-center justify-center border-2 border-[#0078d7] bg-[#e1e1e1] text-[16.500px]">Log In</div>
          <div className="mt-[10px] mr-[2px] flex gap-[11px] text-[10.800px] font-bold tracking-[-0.030em] whitespace-nowrap text-white">
            <span>© Blue Prism Limited, 2001 - 2024</span>
            <span className="underline underline-offset-2">Terms of Use</span>
          </div>
        </div>
      </div>
    </div>
  );
}

export default function App() {
  return (
    <div className="relative flex h-[1200px] w-[1600px] flex-col overflow-hidden font-['Open_Sans','Noto_Sans',sans-serif] text-black">
      <TitleBar />
      <div className="bg-linear-to-r from-[#f0f0f0] to-[#fcfcfc]">
        <MenuBar />
        <Toolbars />
      </div>
      <Workspace />
      <StatusBar />
      <Taskbar />
      <Modeller />
      <Login />
    </div>
  );
}
